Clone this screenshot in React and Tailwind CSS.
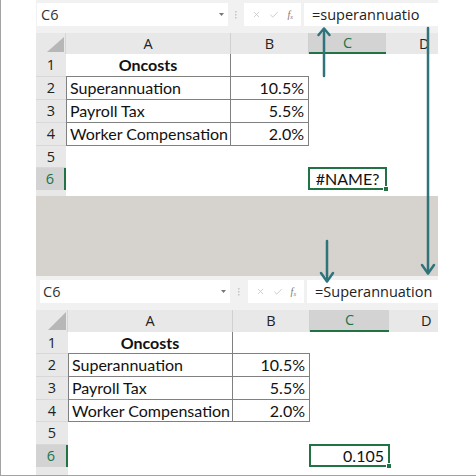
import React from 'react';
import { X, Check } from 'lucide-react';

const TEAL = '#2e747a';

// two screenshots of the same sheet, taken at slightly different zoom
const topShot = {
  bar: 'h-[33px] pt-[3px] pl-[1px]',
  nameBox: 'w-[191px] pl-[4px] pr-[4px]',
  dots: 'w-[16px]',
  btns: 'w-[57px]',
  formulaBox: 'w-[134px] ml-[3px] pl-[8px]',
  header: 'h-[21px]',
  cols: ['w-[30px]', 'w-[165px]', 'w-[78px]', 'w-[77px]', 'w-[52px]'],
  dPad: 'pl-[33px]',
  rows: ['h-[23px]', 'h-[23px]', 'h-[23px]', 'h-[23px]', 'h-[22px]', 'h-[22px]'],
  tail: 'h-[6px]',
  corner: '28,4 28,19 11,19',
  formula: '=superannuatio',
  value: '#NAME?',
  valueAlign: 'justify-center',
};

const bottomShot = {
  bar: 'h-[34px] pt-[4px] pl-[4px]',
  nameBox: 'w-[190px] pl-[3px] pr-[4px]',
  dots: 'w-[18px]',
  btns: 'w-[56px]',
  formulaBox: 'w-[131px] ml-[3px] pl-[8px]',
  header: 'h-[22px]',
  cols: ['w-[32px]', 'w-[165px]', 'w-[77px]', 'w-[79px]', 'w-[49px]'],
  dPad: 'pl-[32px]',
  rows: ['h-[22px]', 'h-[23px]', 'h-[23px]', 'h-[22px]', 'h-[23px]', 'h-[22px]'],
  tail: 'h-[8px]',
  corner: '30,2 30,20 12,20',
  formula: '=Superannuation',
  value: '0.105',
  valueAlign: 'justify-end pr-[4px]',
};

const data = [
  ['Oncosts', ''],
  ['Superannuation', '10.5%'],
  ['Payroll Tax', '5.5%'],
  ['Worker Compensation', '2.0%'],
  ['', ''],
  ['', ''],
];

const aBorder = (i) => (i === 0 ? 'border-r border-b' : i <= 3 ? 'border-l border-r border-b' : '');
const bBorder = (i) => (i === 0 ? 'border-b' : i <= 3 ? 'border-r border-b' : '');

const Sheet = ({ s }) => {
  return (
    <div className="flex flex-col bg-white">
      {/* Name box + formula bar */}
      <div className={`${s.bar} flex items-start bg-[#f1f1f1]`}>
        <div className={`${s.nameBox} h-[23px] bg-white flex items-center justify-between font-['Open_Sans',sans-serif] text-[14.5px] text-[#333]`}>
          <span>C6</span>
          <svg width="5" height="3" viewBox="0 0 5 3">
            <polygon points="0,0 5,0 2.5,3" fill="#777" />
          </svg>
        </div>
        <div className={`${s.dots} h-[23px] flex items-center justify-center`}>
          <svg width="2" height="8" viewBox="0 0 2 8">
            <rect x="0" y="0" width="1.5" height="1.5" fill="#c4c4c4" />
            <rect x="0" y="3" width="1.5" height="1.5" fill="#c4c4c4" />
            <rect x="0" y="6" width="1.5" height="1.5" fill="#c4c4c4" />
          </svg>
        </div>
        <div className={`${s.btns} h-[23px] bg-white flex items-center justify-around px-[4px]`}>
          <X size={9} color="#c2c2c2" strokeWidth={2} />
          <Check size={10} color="#c2c2c2" strokeWidth={2} />
          <span className="font-['Liberation_Serif',serif] italic text-[10px] text-[#777] leading-none">
            f<sub className="text-[6px]">x</sub>
          </span>
        </div>
        <div className={`${s.formulaBox} h-[23px] bg-white flex items-center font-['Open_Sans',sans-serif] text-[14.5px] text-[#222] whitespace-nowrap overflow-hidden`}>
          {s.formula}
        </div>
      </div>

      {/* Column headers */}
      <div className={`${s.header} flex font-['Open_Sans',sans-serif] text-[14.5px] text-[#222]`}>
        <div className={`${s.cols[0]} relative bg-[#e8e8e8] border-r border-[#d6d6d6]`}>
          <svg className="absolute inset-0" width="100%" height="100%">
            <polygon points={s.corner} fill="#b7b7b7" />
          </svg>
        </div>
        <div className={`${s.cols[1]} bg-[#e8e8e8] border-r border-[#d0d0d0] flex items-center justify-center`}>A</div>
        <div className={`${s.cols[2]} bg-[#e8e8e8] border-r border-[#d0d0d0] flex items-center justify-center`}>B</div>
        <div className={`${s.cols[3]} bg-[#d3d3d3] border-b-2 border-[#217346] text-[#217346] flex items-center justify-center`}>C</div>
        {/* D is cut off, so its letter sits right of centre */}
        <div className={`${s.cols[4]} ${s.dPad} bg-[#e8e8e8] flex items-center`}>D</div>
      </div>

      {/* Rows */}
      {data.map((r, i) => {
        const active = i === 5;
        return (
          <div key={i} className={`${s.rows[i]} flex`}>
            <div
              className={`${s.cols[0]} flex items-center justify-center font-['Open_Sans',sans-serif] text-[14.5px] ${
                active
                  ? 'bg-[#d3d3d3] text-[#217346] border-r-2 border-r-[#217346]'
                  : 'bg-[#e8e8e8] text-[#222] border-b border-[#d8d8d8]'
              }`}
            >
              {i + 1}
            </div>
            <div
              className={`${s.cols[1]} ${aBorder(i)} border-[#808080] flex items-center px-[3px] font-['Lato',sans-serif] text-[16px] text-[#111] whitespace-nowrap ${
                i === 0 ? 'justify-center font-bold' : ''
              }`}
            >
              {r[0]}
            </div>
            <div
              className={`${s.cols[2]} ${bBorder(i)} border-[#808080] flex items-center justify-end pr-[4px] font-['Lato',sans-serif] text-[16px] text-[#111]`}
            >
              {r[1]}
            </div>
            <div className={`${s.cols[3]} relative`}>
              {active && (
                <div
                  className={`absolute -top-[1px] -left-[1px] -right-[1px] bottom-0 border-2 border-[#217346] flex items-center ${s.valueAlign} font-['Lato',sans-serif] text-[16px] text-[#111]`}
                >
                  {s.value}
                  <div className="absolute -right-[4px] -bottom-[4px] w-[6px] h-[6px] bg-[#217346] border border-white" />
                </div>
              )}
            </div>
            <div className={`${s.cols[4]}`} />
          </div>
        );
      })}

      {/* partial row 7 */}
      <div className={`${s.tail} flex`}>
        <div className={`${s.cols[0]} bg-[#e8e8e8]`} />
      </div>
    </div>
  );
};

export default function App() {
  return (
    <div className="relative w-[476px] h-[476px] bg-white border-l border-b border-[#a3a3a3] flex overflow-hidden">
      <div className="w-[35px]" />
      <div className="w-[402px] flex flex-col">
        <Sheet s={topShot} />
        <div className="h-[80px] bg-[#d6d2cd]" />
        <Sheet s={bottomShot} />
      </div>

      {/* arrows drawn over the screenshots */}
      <svg className="absolute top-0 left-0 pointer-events-none" width="476" height="476" viewBox="0 0 476 476">
        <g stroke={TEAL} strokeWidth="2.5" fill="none" strokeLinecap="round" strokeLinejoin="round">
          <line x1="323" y1="76" x2="323" y2="29" />
          <polyline points="317.5,35 323,28.5 328.5,35" />
          <line x1="427" y1="28" x2="427" y2="273" />
          <polyline points="421,265 427,273.5 433,265" />
          <line x1="326" y1="241" x2="326" y2="281" />
          <polyline points="320,273 326,281.5 332,273" />
        </g>
      </svg>
    </div>
  );
}
